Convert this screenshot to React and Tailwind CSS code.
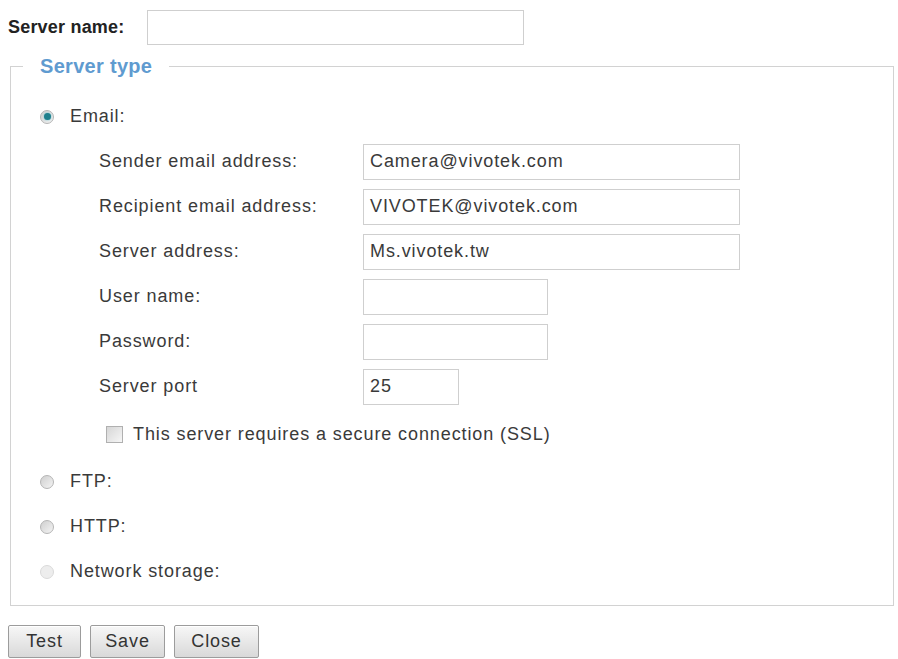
import React from "react";

const Radio = ({ checked, faded }) => (
  <span
    className={`flex items-center justify-center w-[14px] h-[14px] rounded-full border ${
      faded ? "border-[#dadada] bg-[#ededed]" : "border-[#b5b5b5] bg-linear-to-br from-[#cfcfcf] to-[#f4f4f4]"
    }`}
  >
    {checked && <span className="w-[7px] h-[7px] rounded-full bg-[#1f7f8c] shadow-[0_0_2px_#5fc2d0]"></span>}
  </span>
);

const Field = ({ label, value, width }) => (
  <div className="flex items-center h-[45px]">
    <span className="w-[264px]">{label}</span>
    <div className={`${width} h-[36px] border border-[#cfcfcf] flex items-center px-[6px]`}>{value}</div>
  </div>
);

const Btn = ({ children, width }) => (
  <button
    className={`${width} h-[33px] border border-[#9c9c9c] rounded-[2px] bg-linear-to-b from-[#f7f7f7] to-[#d9d9d9] text-[18px] text-[#333] shadow-[inset_0_1px_0_#fff]`}
  >
    {children}
  </button>
);

export default function App() {
  const fields = [
    { label: "Sender email address:", value: "Camera@vivotek.com", width: "w-[377px]" },
    { label: "Recipient email address:", value: "VIVOTEK@vivotek.com", width: "w-[377px]" },
    { label: "Server address:", value: "Ms.vivotek.tw", width: "w-[377px]" },
    { label: "User name:", value: "", width: "w-[185px]" },
    { label: "Password:", value: "", width: "w-[185px]" },
    { label: "Server port", value: "25", width: "w-[96px]" },
  ];

  return (
    <div className="w-[898px] h-[659px] bg-white text-[#3a3a3a] text-[18px] tracking-[0.9px] font-['Liberation_Sans',Arial,sans-serif] pt-[10px] overflow-hidden">
      <div className="flex items-center pl-[8px]">
        <span className="w-[139px] font-bold text-[#222] tracking-[0.2px]">Server name:</span>
        <div className="w-[377px] h-[35px] border border-[#cfcfcf]"></div>
      </div>

      <fieldset className="ml-[10px] mt-[10px] w-[884px] h-[551px] border border-[#d2d2d2]">
        <legend className="ml-[12px] px-[17px] leading-[22px] text-[20px] text-[#5f9bd0] font-bold tracking-[0.3px]">
          Server type
        </legend>

        <div className="pt-[17px] pl-[29px]">
          <div className="flex items-center h-[45px] gap-[16px]">
            <Radio checked />
            <span>Email:</span>
          </div>

          <div className="pl-[59px]">
            {fields.map((f) => (
              <Field key={f.label} label={f.label} value={f.value} width={f.width} />
            ))}
            <div className="flex items-center h-[50px] pl-[7px] gap-[10px]">
              <span className="w-[17px] h-[17px] border border-[#b0b0b0] bg-linear-to-br from-[#d6d6d6] to-[#f6f6f6]"></span>
              <span>This server requires a secure connection (SSL)</span>
            </div>
          </div>

          <div className="flex items-center h-[45px] gap-[16px]">
            <Radio />
            <span>FTP:</span>
          </div>
          <div className="flex items-center h-[45px] gap-[16px]">
            <Radio />
            <span>HTTP:</span>
          </div>
          <div className="flex items-center h-[45px] gap-[16px]">
            <Radio faded />
            <span>Network storage:</span>
          </div>
        </div>
      </fieldset>

      <div className="flex gap-[9px] pl-[8px] mt-[19px]">
        <Btn width="w-[73px]">Test</Btn>
        <Btn width="w-[75px]">Save</Btn>
        <Btn width="w-[85px]">Close</Btn>
      </div>
    </div>
  );
}
